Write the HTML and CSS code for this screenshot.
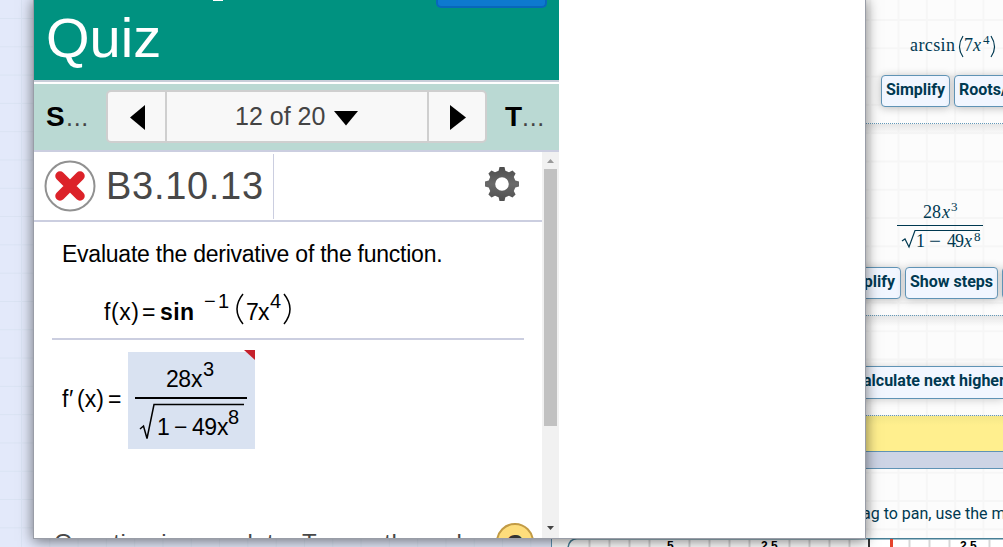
FILE: index.html
```html
<!DOCTYPE html>
<html lang="en">
<head>
<meta charset="utf-8">
<title>Quiz</title>
<link rel="stylesheet" href="styles.css">
</head>
<body>
<main class="calculator">
  <section class="step step-input">
    <svg class="math" width="138" height="66">
      <text x="45" y="51" textLength="45">arcsin</text>
      <path d="M98 36Q91 47 98 57M126 36Q133 47 126 57"/>
      <text x="99" y="51">7</text><text class="it" x="108" y="51" textLength="10">x</text><text class="sup" x="118" y="44">4</text>
    </svg>
    <div class="buttons first"><span class="btn simplify">Simplify</span><span class="btn roots">Roots/zeros</span></div>
  </section>
  <section class="step step-result">
    <svg class="math" width="138" height="134">
      <text x="58" y="94" textLength="18">28</text><text class="it" x="77" y="94" textLength="9">x</text><text class="sup" x="86" y="87">3</text>
      <path class="rule" d="M32 101.5H118"/>
      <path d="M37 117L40 115L44 123L50 106.5H115"/>
      <text x="51" y="123">1</text><text x="64" y="123" textLength="12" lengthAdjust="spacingAndGlyphs">−</text><text x="82" y="123" textLength="17">49</text><text class="it" x="99" y="123" textLength="9">x</text><text class="sup" x="109" y="117">8</text>
    </svg>
    <div class="buttons second"><span class="btn clipped">Simplify</span><span class="btn steps">Show steps</span><span class="btn roots">Roots</span></div>
  </section>
  <section class="step step-next"><div class="next">alculate next higher</div></section>
  <div class="yellow"></div>
  <div class="band"></div>
  <p class="hint">ag to pan, use the m</p>
  <svg class="graph" width="452" height="9">
    <path class="ticks" d="M37.5 2V9M57.5 2V9M77.5 2V9M97.5 2V9M137.5 2V9M157.5 2V9M177.5 2V9M197.5 2V9M237.5 2V9M257.5 2V9M277.5 2V9M297.5 2V9M357.5 2V9M377.5 2V9M397.5 2V9M437.5 2V9"/>
    <path class="frame" d="M16 10Q17 1 25 .8H452"/>
    <path class="axis" d="M317 1V9"/><path class="curve" d="M339.5 1V9"/>
    <text x="115" y="12">5</text><text x="209" y="12">2.5</text><text x="408" y="12">2.5</text>
  </svg>
</main>
<div class="window">
  <div class="quiz">
    <header class="title"><h1>Quiz</h1><span class="submit"></span><span class="descender"></span></header>
    <nav class="nav">
      <div class="side"><b>S</b><span>...</span></div>
      <div class="pager">
        <span class="prev"><svg width="16" height="26"><path d="M16 0V25L1 12.5Z"/></svg></span>
        <span class="count"><span class="number">12 of 20</span><svg width="26" height="16"><path d="M1 1H25L13 15.5Z"/></svg></span>
        <span class="following"><svg width="18" height="26"><path d="M1 0V25L17 12.5Z"/></svg></span>
      </div>
      <div class="side right"><b>T</b><span>...</span></div>
    </nav>
    <div class="body">
      <div class="content">
        <div class="heading">
          <svg class="wrong" width="52" height="52" viewBox="0 0 52 52"><circle cx="26" cy="26" r="24.5"/><path d="M16 16L36 36M36 16L16 36"/></svg>
          <h2>B3.10.13</h2>
          <svg class="gear" width="36" height="36" viewBox="-18 -18 36 36">
            <defs><linearGradient id="metal" x1="0" y1="0" x2="0" y2="1"><stop offset="0" stop-color="#4c4c4c"/><stop offset=".5" stop-color="#696969"/><stop offset="1" stop-color="#505050"/></linearGradient></defs>
            <path fill="url(#metal)" fill-rule="evenodd" d="M-2.500-17H2.500L3.400-13.300L7-11.800L10.500-13.600L13.600-10.500L11.800-7L13.300-3.400L17-2.500V2.500L13.300 3.400L11.800 7L13.600 10.500L10.500 13.600L7 11.800L3.400 13.300L2.500 17H-2.500L-3.400 13.300L-7 11.800L-10.500 13.600L-13.600 10.500L-11.800 7L-13.300 3.400L-17 2.500V-2.500L-13.300-3.400L-11.800-7L-13.600-10.500L-10.500-13.600L-7-11.800L-3.400-13.300ZM6.800 0A6.800 6.800 0 1 0-6.800 0A6.800 6.800 0 1 0 6.800 0Z"/>
          </svg>
        </div>
        <p class="question">Evaluate the derivative of the function.</p>
        <svg class="function" width="508" height="67">
          <text x="70" y="49" textLength="35">f(x)</text><text x="108" y="49" textLength="12">=</text>
          <text class="bold" x="126" y="49" textLength="34">sin</text>
          <text class="power" x="170" y="37" textLength="10">−</text><text class="power" x="184" y="37">1</text>
          <path d="M209 23Q197 38 209 53M250 23Q262 38 250 53"/>
          <text x="212" y="49">7</text><text x="224" y="49" textLength="12">x</text><text class="power" x="236" y="37">4</text>
        </svg>
        <div class="divider"></div>
        <div class="answer">
          <svg class="lhs" width="68" height="97"><text x="2" y="57">f</text><text x="9" y="57">′</text><text x="17" y="57" textLength="27">(x)</text><text x="48" y="57" textLength="12">=</text></svg>
          <svg class="rhs" width="127" height="99">
            <rect y="2" width="127" height="97"/><path class="flag" d="M116 0H127V10Z"/>
            <text x="38" y="37" textLength="25">28</text><text x="63" y="37" textLength="11">x</text><text class="power" x="75" y="26">3</text>
            <path class="bar" d="M7 48H119"/><path d="M12 79L15.500 76L19 88.500L26 54.500H116"/>
            <text x="29" y="85">1</text><text x="46" y="85" textLength="11">−</text><text x="64" y="85" textLength="25">49</text><text x="89" y="85" textLength="12">x</text><text class="power" x="100" y="74">8</text>
          </svg>
        </div>
        <div class="status"><p>Question is complete. Tap on the red</p><span class="help">?</span></div>
      </div>
      <div class="scrollbar"><svg width="17" height="17"><path d="M5 11H12L8.500 7Z"/></svg><div class="thumb"></div><svg class="down" width="17" height="17"><path d="M5 6H12L8.500 10Z"/></svg></div>
    </div>
  </div>
</div>
</body>
</html>
```
FILE: styles.css
```css
* { box-sizing: border-box; }
body {
  margin: 0; width: 1003px; height: 547px; overflow: hidden; position: relative;
  font-family: "Liberation Sans", Arial, sans-serif; color: #000;
  background-color: #e3e9fa;
  background-image: linear-gradient(#dae3f3 1px, transparent 1px), linear-gradient(90deg, #dae3f3 1px, transparent 1px);
  background-size: 28.3px 28.3px; background-position: 21px 18px;
}
h1, h2, p { margin: 0; font-weight: normal; white-space: nowrap; }
.calculator {
  margin-left: 551px; width: 452px; height: 547px; border-left: 1px solid #5f93b5;
  font-family: Roboto, sans-serif; color: #003951; display: flex; flex-direction: column; overflow: hidden;
  background-color: #fcfcfc;
  background-image: linear-gradient(#f6f6f6 2px, transparent 2px), linear-gradient(90deg, #f6f6f6 2px, transparent 2px);
  background-size: 28.3px 28.3px; background-position: 6px 19px;
}
.step { border-bottom: 1px dotted #6499b8; padding-left: 313px; flex: none; overflow: hidden; }
.step + .step { background-image: linear-gradient(#e6e6e6, transparent 10px); }
.step-input { height: 124px; }
.step-result { height: 192px; }
.step-next { height: 100px; }
.math { display: block; fill: #003951; font-family: "Liberation Serif", serif; font-size: 18px; }
.math path { fill: none; stroke: #003951; stroke-width: 1.2; }
.math .rule { stroke-width: 1; }
.math .sup { font-size: 13px; }
.math .it { font-style: italic; }
.buttons { display: flex; gap: 4px; }
.first { padding: 9px 0 0 16px; }
.second { padding: 9px 0 0 0; }
.btn {
  flex: none; height: 32px; border: 1px solid #5f93b5; border-radius: 4px; background: #f1f6ff;
  font-weight: bold; font-size: 16px; line-height: 28px; text-align: center; white-space: nowrap;
  box-shadow: 0 1px 8px #b9b9b9;
}
.simplify { width: 69px; }
.roots { width: 98px; padding-left: 4px; text-align: left; }
.clipped { width: 75px; margin-left: -39px; padding-left: 4px; }
.steps { width: 93px; }
.next { margin: 50px 0 0 -20px; height: 33px; border: solid #5f93b5; border-width: 1px 0; background: #f1f6ff; padding-left: 18px; font: bold 16px/28px Roboto, sans-serif; white-space: nowrap; box-shadow: 0 1px 8px #ccc; }
.yellow { height: 36px; flex: none; background: linear-gradient(#f4e788, #ffef8e 9px); border-bottom: 1px solid #5f93b5; }
.band { height: 17px; flex: none; background: #cdd4e5; border-bottom: 1px solid #5f93b5; }
.hint { height: 69px; flex: none; padding: 34px 0 0 310px; font-size: 16px; line-height: 21px; }
.graph { display: block; background: #fff; font: bold 12px "Liberation Sans", sans-serif; flex: none; }
.graph .ticks { fill: none; stroke: #d7d7d7; stroke-width: 2; }
.graph .frame { fill: none; stroke: #477f96; stroke-width: 1.5; }
.graph .axis { stroke: #333; stroke-width: 2; }
.graph .curve { stroke: #e5432c; stroke-width: 3; }
.window { position: absolute; left: 33px; top: -2px; width: 833px; height: 541px; border: 1px solid #999da7; background: #fff; box-shadow: 0 2px 13px #0008; overflow: hidden; padding-top: 1px; }
.quiz { width: 525px; height: 538px; overflow: hidden; }
.title { height: 84px; border-bottom: 2px solid #fff; background: linear-gradient(#009280 80px, #c8ced9 80px); display: grid; grid-template-columns: 179px 223px 111px; overflow: hidden; }
.title h1 { grid-column: 1; grid-row: 1; color: #fff; font-size: 56px; line-height: 76px; padding-left: 12px; }
.submit { grid-column: 3; grid-row: 1; height: 8px; background: #0d79cf; border: 2px solid #0867bb; border-top: 0; border-radius: 0 0 5px 5px; }
.descender { grid-column: 2; grid-row: 1; width: 10px; height: 1px; background: #fff; }
.nav { height: 66px; background: #bad9d3; display: grid; grid-template-columns: 72px 381px 1fr; padding-top: 6px; }
.side { padding-left: 12px; font-size: 28px; line-height: 54px; white-space: nowrap; }
.side b { display: inline-block; width: 20px; }
.side span { font-size: 25px; color: #444; letter-spacing: .7px; }
.side.right { padding-left: 18px; }
.side.right b { width: 17px; }
.pager { height: 53px; border: 2px solid #cfcfcf; border-radius: 5px; background: #f8f8f8; display: grid; grid-template-columns: 57px 264px 1fr; }
.pager > span { display: flex; align-items: center; justify-content: center; }
.pager .prev { padding-top: 2px; }
.pager .following { padding: 2px 0 0 1px; }
.pager .count { border: solid #cfcfcf; border-width: 0 2px; font-size: 25px; color: #444; gap: 6px; }
.pager .count svg { margin-top: 3px; }
.number { width: 92px; white-space: nowrap; padding-bottom: 1px; }
.pager svg { flex: none; }
.body { height: 388px; display: grid; grid-template-columns: 508px 17px; border-top: 2px solid #cbcee0; }
.content { height: 386px; overflow: hidden; }
.heading { height: 70px; border-bottom: 2px solid #cbcee0; display: grid; grid-template-columns: 72px 168px 1fr; padding-top: 2px; }
.wrong { margin: 6px 0 0 10px; }
.wrong circle { fill: #fff; stroke: #919191; stroke-width: 2; }
.wrong path { stroke: #dc2229; stroke-width: 9.5; stroke-linecap: round; }
.heading h2 { height: 65px; border-right: 1px solid #cbcee0; font-size: 38px; line-height: 64px; letter-spacing: .7px; color: #484848; }
.gear { margin: 12px 0 0 210px; }
.question { height: 49px; padding: 17px 0 0 28px; font-size: 23px; line-height: 30px; letter-spacing: -.24px; }
.function, .answer svg { display: block; font-size: 23px; }
.function .bold { font-weight: bold; }
.function .power, .answer .power { font-size: 20px; }
.function path { fill: none; stroke: #000; stroke-width: 1.5; }
.divider { height: 2px; background: #cbcee0; margin: 0 18px; }
.answer { height: 108px; display: flex; padding: 10px 0 0 26px; }
.answer svg { flex: none; }
.rhs { overflow: hidden; }
.rhs rect { fill: #d9e2f1; }
.rhs path { fill: none; stroke: #000; stroke-width: 1.5; }
.rhs .bar { stroke-width: 2; }
.rhs .flag { fill: #c5212c; stroke: none; }
.status { height: 90px; padding: 75px 0 0 20px; display: grid; grid-template-columns: 442px 36px; overflow: hidden; color: #484848; font-size: 24px; letter-spacing: .5px; }
.status p { overflow: hidden; padding-top: 5px; line-height: 30px; }
.help { width: 38px; height: 38px; border: 2px solid #c29b45; border-radius: 50%; background: #fddd7c; color: #333; font: bold 29px/40px "Liberation Sans", sans-serif; text-align: center; }
.scrollbar { height: 386px; background: #f1f1f1; display: grid; grid-template-rows: 17px 257px 1fr; justify-items: center; }
.scrollbar path { fill: #999; }
.thumb { width: 13px; background: #c1c1c1; }
.scrollbar .down { align-self: end; margin-bottom: 1px; }
.scrollbar .down path { fill: #444; }
```
